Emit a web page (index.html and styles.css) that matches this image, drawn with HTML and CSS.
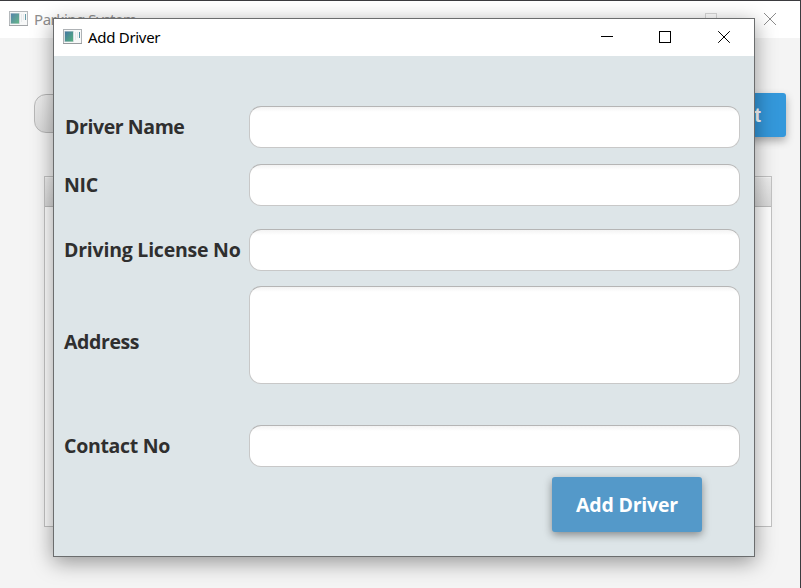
FILE: index.html
```
<!DOCTYPE html>
<html lang="en">
<head>
<meta charset="utf-8">
<title>Parking System</title>
<link rel="stylesheet" href="styles.css">
</head>
<body>
<svg class="defs" width="0" height="0">
  <defs>
    <linearGradient id="tile" x1="0" y1="0" x2="1" y2="1">
      <stop offset="0" stop-color="#4377a3"/><stop offset="1" stop-color="#55b07c"/>
    </linearGradient>
    <symbol id="app" viewBox="0 0 19 16">
      <rect x="0.5" y="0.5" width="18" height="14" fill="#f7f8f8" stroke="#aeb2b5"/>
      <path d="M0 14.5h19" stroke="#979b9e"/>
      <rect x="1" y="2" width="10" height="11" fill="#d5dcdf"/>
      <rect x="2" y="2.500" width="8" height="10" fill="url(#tile)"/>
      <path d="M12.500 3v8M14.500 3v6" stroke="#e5e8ea"/>
      <rect x="16" y="3" width="1" height="6" fill="#5793a0"/>
    </symbol>
  </defs>
</svg>
<main class="window">
  <header class="titlebar">
    <svg class="app-icon" width="19" height="16"><use href="#app"/></svg>
    <span class="title">Parking System</span>
    <svg class="controls" width="138" height="37" viewBox="0 0 138 37" fill="none" stroke="#8c8c8c">
      <path d="M3 17.500h12"/><rect x="61.500" y="12.500" width="11" height="11" stroke="#d8d8d8"/>
      <path d="M120 12l12 12M132 12l-12 12"/>
    </svg>
  </header>
  <div class="toolbar">
    <div class="search"></div>
    <div class="action">t</div>
  </div>
  <div class="table"><div class="table-head"></div></div>
</main>
<section class="dialog">
  <header class="titlebar">
    <svg class="app-icon" width="19" height="16"><use href="#app"/></svg>
    <span class="title">Add Driver</span>
    <svg class="controls" width="138" height="37" viewBox="0 0 138 37" fill="none" stroke="#000">
      <path d="M3 17.500h12"/><rect x="61.500" y="12.500" width="11" height="11"/>
      <path d="M120.200 12.200l11.600 11.600M131.800 12.200l-11.600 11.600"/>
    </svg>
  </header>
  <form class="form">
    <label for="name"><span class="l-name">Driver Name</span></label><input id="name">
    <label for="nic"><span class="l-nic">NIC</span></label><input id="nic">
    <label for="license"><span class="l-license">Driving License No</span></label><input id="license">
    <label for="address" class="address"><span class="l-address">Address</span></label><textarea id="address"></textarea>
    <label for="contact"><span class="l-contact">Contact No</span></label><input id="contact">
    <button type="button">Add Driver</button>
  </form>
</section>
</body>
</html>
```
FILE: styles.css
```
* { box-sizing: border-box; }
body {
  margin: 0;
  width: 801px;
  height: 588px;
  overflow: hidden;
  position: relative;
  background: #f4f4f4;
  font-family: "Open Sans", "Noto Sans", sans-serif;
}
.defs { position: absolute; }
.window {
  height: 588px;
  border-top: 1px solid #3b3b3f;
  border-right: 1px solid #3b3b3f;
}
.titlebar {
  display: flex;
  align-items: center;
  height: 37px;
  padding-left: 9px;
  background: #fff;
}
.title {
  margin-left: 6px;
  padding-bottom: 2px;
  font: 15px/20px "Noto Sans", sans-serif;
  letter-spacing: -0.3px;
  white-space: nowrap;
}
.window .title { color: #8e8e8e; letter-spacing: -0.45px; }
.window .app-icon { opacity: 0.9; }
.app-icon { margin-bottom: 1px; }
.controls { margin-left: auto; margin-right: 18px; }
.toolbar {
  display: flex;
  justify-content: space-between;
  align-items: center;
  height: 44px;
  margin: 55px 14px 0 34px;
}
.search {
  width: 200px;
  height: 39px;
  margin-bottom: 3px;
  border: 1px solid #b8b8b8;
  border-radius: 12px;
  background: linear-gradient(#ececec, #dadada);
}
.action {
  width: 150px;
  height: 44px;
  padding-right: 25px;
  border-radius: 3px;
  background: #3498db;
  color: #fff;
  font: bold 20px/44px "Liberation Sans", sans-serif;
  text-align: right;
  box-shadow: 0 4px 8px rgba(0, 0, 0, 0.3);
}
.table {
  height: 351px;
  margin: 39px 28px 0 44px;
  border: 1px solid #c3c3c3;
  background: #fff;
}
.table-head {
  height: 30px;
  border-bottom: 1px solid #bcbcbc;
  background: linear-gradient(#efefef, #d9d9d9);
  box-shadow: inset 0 1px #f6f6f6;
}
.dialog {
  position: absolute;
  left: 53px;
  top: 18px;
  width: 702px;
  height: 539px;
  border: 1px solid #6b6d6e;
  background: #dde5e8;
  box-shadow: 0 5px 20px rgba(0, 0, 0, 0.4);
}
.form {
  display: grid;
  grid-template-columns: 185px 491px;
  grid-template-rows: 58px 65px 57px 139px 52px 55px;
  padding: 50px 0 0 10px;
}
label {
  display: flex;
  align-items: center;
  height: 42px;
  padding-bottom: 2px;
  color: #2f2f2f;
  font-size: 19.500px;
  font-weight: 700;
  letter-spacing: -0.3px;
  white-space: nowrap;
}
label.address { height: 111px; padding-bottom: 0; }
.l-name { padding-left: 1px; letter-spacing: -0.42px; }
.l-license { letter-spacing: -0.23px; }
.l-address { letter-spacing: -0.4px; }
input, textarea {
  width: 491px;
  height: 42px;
  margin: 0;
  padding: 0 12px;
  border: 1px solid #c8c8c8;
  border-top-color: #b5b5b5;
  border-radius: 12px;
  outline: 0;
  background: linear-gradient(#f3f3f3, #fff 5px);
  resize: none;
}
textarea { height: 98px; }
button {
  grid-column: 2;
  width: 150px;
  height: 55px;
  margin-left: 303px;
  padding: 0;
  border: 0;
  border-radius: 3px;
  background: #5499c9;
  color: #fff;
  font: 700 19.500px "Open Sans", sans-serif;
  letter-spacing: -0.2px;
  box-shadow: 0 3px 9px rgba(0, 0, 0, 0.4);
}
```
